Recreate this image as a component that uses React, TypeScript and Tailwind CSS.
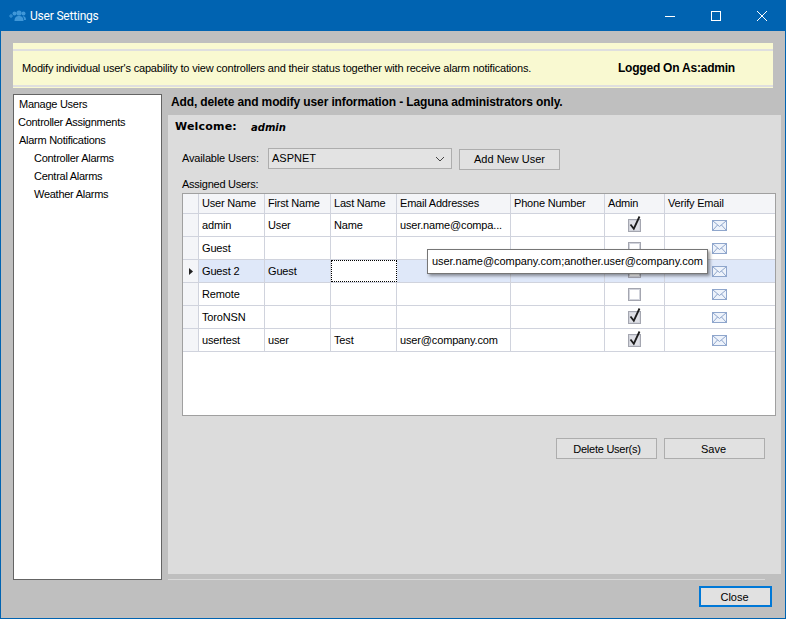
import React from "react";

const columns = "grid-cols-[16px_66px_66px_66px_114px_94px_60px_110px]";

const rows = [
  { u: "admin", f: "User", l: "Name", e: "user.name@compa...", c: true },
  { u: "Guest", f: "", l: "", e: "", c: false },
  { u: "Guest 2", f: "Guest", l: "", e: "", c: false, sel: true },
  { u: "Remote", f: "", l: "", e: "", c: false },
  { u: "ToroNSN", f: "", l: "", e: "", c: true },
  { u: "usertest", f: "user", l: "Test", e: "user@company.com", c: true },
];

function Check({ on }: { on: boolean }) {
  return (
    <svg width="16" height="18" viewBox="0 0 16 18" className="mb-[2px]">
      <rect x="1.5" y="4.5" width="12" height="12" fill="#fff" stroke="#a4a6b0" />
      <rect x="2.5" y="5.5" width="10" height="10" fill={on ? "#dfe0e6" : "#fff"} stroke="#d2d4dc" />
      {on && <path d="M3.5 9.5 L6.8 13.7 L12.5 1.5" fill="none" stroke="#1c1c1c" strokeWidth="1.8" />}
    </svg>
  );
}

function Mail() {
  return (
    <svg width="15" height="11" viewBox="0 0 15 11">
      <rect x="0.5" y="0.5" width="14" height="10" fill="#eef3fb" stroke="#8fa6cc" />
      <path d="M1 1 L7.5 6.5 L14 1 M1 10 L5.5 5 M14 10 L9.5 5" fill="none" stroke="#8fa6cc" />
    </svg>
  );
}

function Btn({ children, extra = "" }: { children: React.ReactNode; extra?: string }) {
  return (
    <div className={`w-[101px] h-[21px] flex items-center justify-center border border-[#adadad] bg-[#e1e1e1] text-[11px] text-black ${extra}`}>
      {children}
    </div>
  );
}

export default function App() {
  return (
    <div
      className="w-[786px] h-[619px] flex flex-col bg-[#0063b1] overflow-hidden text-black"
      style={{ fontFamily: '"Liberation Sans", Arial, sans-serif' }}
    >
      {/* Title bar */}
      <div className="h-[31px] shrink-0 flex items-center pl-[9px] text-white">
        <svg width="17" height="12" viewBox="0 0 17 12" className="mr-[4px]">
          <g fill="#3f97d8">
            <circle cx="10" cy="3" r="2.6" />
            <path d="M5.5 11 C5.5 7 7.5 6 10 6 C12.5 6 14.5 7 14.5 11 Z" />
            <circle cx="14.5" cy="3.5" r="2" />
            <path d="M13.5 6 C15.5 6 17 7 17 10 L15 10 C15 8 14.5 7 13.5 6 Z" />
            <circle cx="5.5" cy="3.5" r="2" />
            <path d="M0 5.5 H4 V6.5 H0 Z M1.5 4 H2.5 V8 H1.5 Z" />
          </g>
        </svg>
        <span className="text-[12px] font-['Roboto'] tracking-[-0.2px]">User Settings</span>
        <div className="ml-auto flex items-center pr-[2px]">
          <svg width="46" height="30" viewBox="0 0 46 30">
            <path d="M18 15.5 H28" stroke="#fff" strokeWidth="1" />
          </svg>
          <svg width="46" height="30" viewBox="0 0 46 30">
            <rect x="18.5" y="10.5" width="9" height="9" fill="none" stroke="#fff" />
          </svg>
          <svg width="45" height="30" viewBox="0 0 45 30">
            <path d="M18 10 L28 20 M28 10 L18 20" stroke="#fff" strokeWidth="1" />
          </svg>
        </div>
      </div>

      {/* Client area */}
      <div className="flex-1 mx-px mb-px bg-[#bfbfbf] flex flex-col pl-[12px] pr-[13px] pt-[12px]">
        {/* Info banner */}
        <div className="w-[760px] h-[45px] shrink-0 bg-[#f9f9d1] pt-[6px] pb-[1px]">
          <div className="h-full border-y-2 border-[#dfdfdf] flex items-center pl-[9px] text-[11px]">
            <span className="w-[596px] tracking-[-0.19px] whitespace-nowrap">
              Modify individual user's capability to view controllers and their status together with receive alarm notifications.
            </span>
            <span className="font-bold text-[12px] tracking-[-0.22px]">Logged On As:admin</span>
          </div>
        </div>

        <div className="flex mt-[6px] h-[486px] shrink-0">
          {/* Navigation */}
          <div className="w-[149px] shrink-0 bg-white border border-[#646464] text-[11px] tracking-[-0.27px]">
            {[
              ["Manage Users", "pl-[5px]"],
              ["Controller Assignments", "pl-[4px]"],
              ["Alarm Notifications", "pl-[5px]"],
              ["Controller Alarms", "pl-[20px]"],
              ["Central Alarms", "pl-[20px]"],
              ["Weather Alarms", "pl-[20px]"],
            ].map(([t, p]) => (
              <div key={t} className={`h-[18px] leading-[18px] ${p}`}>{t}</div>
            ))}
          </div>

          {/* Right column */}
          <div className="ml-[6px] flex-1 flex flex-col">
            <div className="h-[21px] shrink-0 pl-[3px] font-bold text-[12px] tracking-[-0.13px] leading-[17px] whitespace-nowrap">
              Add, delete and modify user information - Laguna administrators only.
            </div>
            <div className="w-[613px] -mr-[12px] h-[459px] shrink-0 bg-[#dcdcdc] flex flex-col pl-[14px]">
              <div className="h-[24px] flex items-center -ml-[7px] font-bold text-[11px] font-['DejaVu_Sans'] tracking-[0.2px]">
                <span className="w-[76px]">Welcome:</span>
                <span className="italic text-[10px] tracking-normal">admin</span>
              </div>

              <div className="flex items-center mt-[9px] h-[21px] text-[11px]">
                <span className="w-[86px] whitespace-nowrap tracking-[-0.15px]">Available Users:</span>
                <div className="w-[184px] h-[21px] border border-[#adadad] bg-[#e3e3e3] flex items-center pl-[3px] pr-[6px] justify-between">
                  <span>ASPNET</span>
                  <svg width="10" height="6" viewBox="0 0 10 6">
                    <path d="M1 1 L5 5 L9 1" fill="none" stroke="#444" />
                  </svg>
                </div>
                <div className="ml-[7px] mt-[2px]"><Btn>Add New User</Btn></div>
              </div>

              <div className="mt-[8px] h-[15px] leading-[15px] text-[11px] tracking-[-0.25px]">Assigned Users:</div>

              {/* Grid */}
              <div className="mt-[1px] w-[594px] h-[223px] bg-white border border-[#a0a0a0] text-[11px] relative">
                <div className={`grid ${columns} h-[20px] bg-[#f4f5f8] border-b border-[#d0d3dd] tracking-[-0.2px]`}>
                  {["", "User Name", "First Name", "Last Name", "Email Addresses", "Phone Number", "Admin", "Verify Email"].map((h, i) => (
                    <div key={i} className="border-r border-[#d0d3dd] last:border-r-0 pl-[3px] leading-[18px] whitespace-nowrap">
                      {h}
                    </div>
                  ))}
                </div>
                {rows.map((r) => (
                  <div
                    key={r.u}
                    className={`grid ${columns} h-[23px] border-b border-[#d0d3dd] leading-[22px] tracking-[-0.15px] ${r.sel ? "bg-[#dfe8f9]" : ""}`}
                  >
                    <div className="bg-[#f4f5f8] border-r border-[#d0d3dd] flex items-center justify-center">
                      {r.sel && (
                        <svg width="5" height="7" viewBox="0 0 5 7" className="mt-[1px] ml-[1px]"><path d="M0 0 L4 3.5 L0 7 Z" fill="#222" /></svg>
                      )}
                    </div>
                    <div className="border-r border-[#d0d3dd] pl-[3px] whitespace-nowrap">{r.u}</div>
                    <div className="border-r border-[#d0d3dd] pl-[3px] whitespace-nowrap">{r.f}</div>
                    <div className={`border-r border-[#d0d3dd] pl-[3px] whitespace-nowrap ${r.sel ? "border border-dotted border-black bg-white" : ""}`}>{r.l}</div>
                    <div className="border-r border-[#d0d3dd] pl-[3px] whitespace-nowrap">{r.e}</div>
                    <div className="border-r border-[#d0d3dd]" />
                    <div className="border-r border-[#d0d3dd] flex items-center justify-center"><Check on={r.c} /></div>
                    <div className="flex items-center justify-center pr-[2px]"><Mail /></div>
                  </div>
                ))}

                {/* Tooltip */}
                <div className="absolute left-[244px] top-[55px] w-[281px] h-[25px] bg-white border border-[#767676] flex items-center pl-[4px] whitespace-nowrap tracking-[-0.05px] shadow-[2px_2px_3px_rgba(0,0,0,0.4)]">
                  user.name@company.com;another.user@company.com
                </div>
              </div>

              <div className="flex mt-[22px] pl-[374px] gap-[7px]">
                <Btn extra="tracking-[-0.25px] pt-[1px] pl-[1px]">Delete User(s)</Btn>
                <Btn extra="pt-[1px] pr-[2px]">Save</Btn>
              </div>
            </div>
            <div className="mt-[5px] h-px w-[597px] bg-[#d9d9d9]" />
          </div>
        </div>

        {/* Footer */}
        <div className="flex justify-end mt-[6px]">
          <div className="w-[73px] h-[21px] border-2 border-[#0078d7] bg-[#e1e1e1] flex items-center justify-center text-[11px] pt-[1px] pr-[2px]">
            Close
          </div>
        </div>
      </div>
    </div>
  );
}
